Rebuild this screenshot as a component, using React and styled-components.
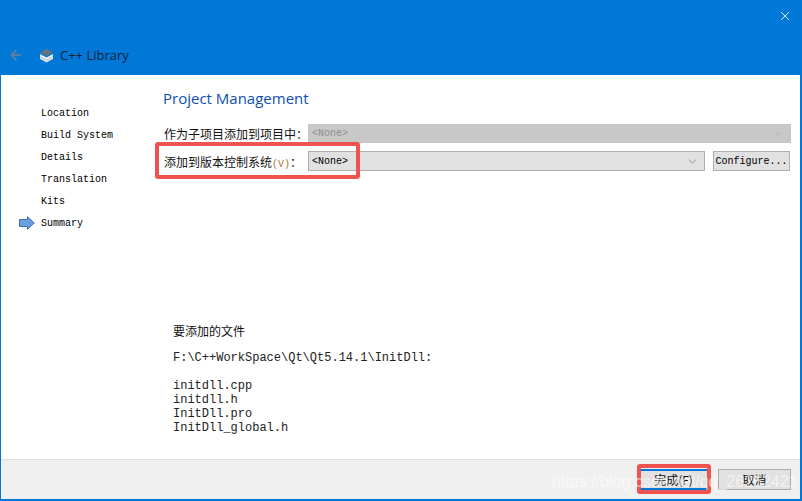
import React from "react";
import styled, { createGlobalStyle } from "styled-components";
import { ChevronDown, X, ArrowLeft } from "lucide-react";

const Global = createGlobalStyle`
  html, body { margin: 0; padding: 0; background: #fff; }
`;

const Dialog = styled.div`
  position: relative;
  box-sizing: border-box;
  width: 802px;
  height: 501px;
  display: flex;
  flex-direction: column;
  overflow: hidden;
  background: #fff;
  border: solid #0078d7;
  border-width: 0 2px 2px 1px;
  font-family: "Liberation Mono", monospace;
  color: #111;
`;

const Header = styled.header`
  height: 75px;
  flex: none;
  margin: 0 -2px 0 -1px;
  background: #0078d7;
  display: flex;
  flex-direction: column;
`;

const CloseRow = styled.div`
  height: 32px;
  display: flex;
  justify-content: flex-end;
  align-items: center;
  padding: 0 10px 2px 0;
  color: #fff;
`;

const TitleRow = styled.div`
  display: flex;
  align-items: center;
  margin-top: 10px;
  height: 22px;
  padding-left: 8px;
  font-family: "Open Sans", "Noto Sans", sans-serif;
  font-size: 13px;
  color: #10233a;
`;

const BackIcon = styled(ArrowLeft)`
  color: #6f8199;
  margin-right: 15px;
`;

const StackIcon = styled.svg`
  width: 15px;
  height: 15px;
  margin-right: 6px;
`;

const Body = styled.div`
  flex: 1;
  display: flex;
  min-height: 0;
`;

const Sidebar = styled.nav`
  width: 152px;
  flex: none;
  padding-top: 27px;
  box-sizing: border-box;
`;

const Step = styled.div`
  height: 22px;
  display: flex;
  align-items: center;
  padding-left: 18px;
  font-size: 10px;
  color: #000;
`;

const StepMarker = styled.span`
  width: 22px;
  flex: none;
  display: flex;
  align-items: center;
`;

const Main = styled.main`
  flex: 1;
  min-width: 0;
  display: flex;
  flex-direction: column;
  padding: 13px 9px 0 10px;
`;

const Title = styled.h1`
  margin: 0 0 16px;
  height: 20px;
  line-height: 20px;
  font-family: "Open Sans", "Noto Sans", sans-serif;
  font-size: 15px;
  font-weight: 400;
  color: #0f4fb0;
`;

const FormRow = styled.div`
  display: flex;
  align-items: center;
  height: ${(p) => p.$h}px;
  margin-bottom: 8px;
`;

const Label = styled.label`
  width: 144px;
  flex: none;
  padding-left: 1px;
  font-family: "Noto Sans CJK SC", sans-serif;
  font-size: 12px;
  white-space: nowrap;
  color: #111;
`;

const Mnemonic = styled.span`
  font-family: "Liberation Mono", monospace;
  font-size: 10px;
  color: #a8762e;
`;

const Select = styled.div`
  flex: 1;
  height: 100%;
  box-sizing: border-box;
  display: flex;
  align-items: center;
  justify-content: space-between;
  padding: 0 5px 0 3px;
  font-size: 10px;
  border: 1px solid ${(p) => (p.$disabled ? "#c4c4c4" : "#adadad")};
  background: ${(p) => (p.$disabled ? "#c8c8c8" : "#e1e1e1")};
  color: ${(p) => (p.$disabled ? "#8d8d8d" : "#000")};
`;

const SmallButton = styled.button`
  width: 77px;
  height: 100%;
  margin-left: 8px;
  margin-right: 1px;
  padding: 0;
  font-family: "Liberation Mono", monospace;
  font-size: 10px;
  color: #000;
  background: #e1e1e1;
  border: 1px solid #adadad;
`;

const Files = styled.section`
  margin-top: 143px;
  padding-left: 10px;
`;

const FilesTitle = styled.div`
  height: 18px;
  line-height: 18px;
  margin-bottom: 11px;
  font-family: "Noto Sans CJK SC", sans-serif;
  font-size: 12px;
  color: #111;
`;

const FilesList = styled.pre`
  margin: 0;
  font-family: "Liberation Mono", monospace;
  font-size: 12px;
  line-height: 14px;
  color: #222;
`;

const Footer = styled.footer`
  height: 40px;
  flex: none;
  box-sizing: border-box;
  display: flex;
  justify-content: flex-end;
  align-items: flex-start;
  gap: 11px;
  padding: 9px 9px 0 0;
  background: #f0f0f0;
  border-top: 1px solid #dfdfdf;
`;

const FootButton = styled.button`
  height: 21px;
  width: ${(p) => p.$w}px;
  padding: 0;
  font-family: "Noto Sans CJK SC", sans-serif;
  font-size: 12px;
  line-height: 1;
  color: #111;
  background: #e1e1e1;
  border: solid ${(p) => (p.$primary ? "#0078d7" : "#adadad")};
  border-width: ${(p) => (p.$primary ? "2px 0" : "1px")};
`;

const Highlight = styled.div`
  position: absolute;
  left: ${(p) => p.$x}px;
  top: ${(p) => p.$y}px;
  width: ${(p) => p.$w}px;
  height: ${(p) => p.$h}px;
  box-sizing: border-box;
  border: 4px solid #ef5350;
  border-radius: 3px;
  pointer-events: none;
`;

const Watermark = styled.div`
  position: absolute;
  left: 551px;
  top: 472px;
  font-family: "Liberation Sans", sans-serif;
  font-size: 16px;
  line-height: 20px;
  white-space: nowrap;
  color: rgba(255, 255, 255, 0.6);
  pointer-events: none;
`;

const steps = ["Location", "Build System", "Details", "Translation", "Kits", "Summary"];

const App = () => {
  return (
    <>
      <Global />
      <Dialog>
        <Header>
          <CloseRow>
            <X size={14} strokeWidth={1.5} />
          </CloseRow>
          <TitleRow>
            <BackIcon size={16} strokeWidth={2.4} />
            <StackIcon viewBox="0 0 15 15">
              <path d="M1 8.500 7.500 12 14 8.500V11l-6.500 3.500L1 11z" fill="#d9dde2" />
              <path d="M1 6l6.500 3.500L14 6v2.500L7.500 12 1 8.500z" fill="#eef0f2" />
              <path d="M7.500 1 14 4.500 7.500 8 1 4.500z" fill="#68727d" />
            </StackIcon>
            C++ Library
          </TitleRow>
        </Header>
        <Body>
          <Sidebar>
            {steps.map((s) => (
              <Step key={s}>
                <StepMarker>
                  {s === "Summary" && (
                    <svg width="16" height="14" viewBox="0 0 16 14">
                      <path d="M.5 3.500h8V.8L15.300 7 8.500 13.200V10.500h-8z" fill="#6a9fe0" stroke="#3f6fb0" />
                    </svg>
                  )}
                </StepMarker>
                {s}
              </Step>
            ))}
          </Sidebar>
          <Main>
            <Title>Project Management</Title>
            <FormRow $h={19}>
              <Label>作为子项目添加到项目中：</Label>
              <Select $disabled>
                &lt;None&gt;
                <ChevronDown size={13} strokeWidth={1} color="#a8a8a8" />
              </Select>
            </FormRow>
            <FormRow $h={20}>
              <Label>
                添加到版本控制系统<Mnemonic>(V)</Mnemonic>：
              </Label>
              <Select>
                &lt;None&gt;
                <ChevronDown size={13} strokeWidth={1} color="#444" />
              </Select>
              <SmallButton>Configure...</SmallButton>
            </FormRow>
            <Files>
              <FilesTitle>要添加的文件</FilesTitle>
              <FilesList>{`F:\\C++WorkSpace\\Qt\\Qt5.14.1\\InitDll:

initdll.cpp
initdll.h
InitDll.pro
InitDll_global.h`}</FilesList>
            </Files>
          </Main>
        </Body>
        <Footer>
          <FootButton $primary $w={67}>完成(F)</FootButton>
          <FootButton $w={73}>取消</FootButton>
        </Footer>
        <Highlight $x={154} $y={142} $w={205} $h={37} />
        <Highlight $x={636} $y={464} $w={74} $h={30} />
        <Watermark>https://blog.csdn.net/qq_26262421</Watermark>
      </Dialog>
    </>
  );
};

export default App;
